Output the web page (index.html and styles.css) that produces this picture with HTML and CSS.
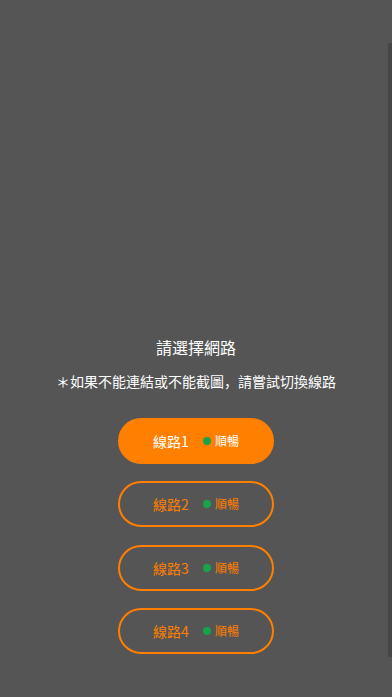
FILE: index.html
```html
<!DOCTYPE html>
<html>
<head>
<meta charset="utf-8">
<link rel="stylesheet" href="styles.css">
</head>
<body>
<div class="page">
  <div class="scrollbar"></div>
  <div class="panel">
    <div class="title">請選擇網路</div>
    <div class="subtitle">＊如果不能連結或不能截圖，請嘗試切換線路</div>
    <div class="lines">
      <div class="line active"><span class="name">線路1</span><span class="status"><span class="dot"></span>順暢</span></div>
      <div class="line"><span class="name">線路2</span><span class="status"><span class="dot"></span>順暢</span></div>
      <div class="line"><span class="name">線路3</span><span class="status"><span class="dot"></span>順暢</span></div>
      <div class="line"><span class="name">線路4</span><span class="status"><span class="dot"></span>順暢</span></div>
    </div>
  </div>
</div>
</body>
</html>
```

FILE: styles.css
```css
html, body {
  margin: 0;
  padding: 0;
}
body {
  background: #555555;
  font-family: "Noto Sans CJK SC", "Noto Sans", sans-serif;
  color: #ffffff;
  text-spacing-trim: space-all;
}
.page {
  position: relative;
  width: 392px;
  height: 697px;
  overflow: hidden;
  display: flex;
  flex-direction: column;
  justify-content: flex-end;
}
.scrollbar {
  position: absolute;
  right: 0;
  top: 43px;
  width: 4px;
  height: 614px;
  background: #464646;
}
.panel {
  display: flex;
  flex-direction: column;
  align-items: center;
  padding-bottom: 43px;
}
.title {
  font-size: 16px;
  line-height: 22px;
  margin-bottom: 13px;
}
.subtitle {
  font-size: 14px;
  line-height: 20px;
  margin-bottom: 27px;
}
.lines {
  display: flex;
  flex-direction: column;
  gap: 17.5px;
}
.line {
  box-sizing: border-box;
  width: 156px;
  height: 46px;
  border: 2px solid #ff7f00;
  border-radius: 23px;
  display: flex;
  align-items: center;
  justify-content: center;
  gap: 14px;
  color: #ff7f00;
}
.line.active {
  background: #ff7f00;
  color: #ffffff;
}
.name {
  font-size: 14px;
  line-height: 20px;
}
.status {
  display: flex;
  align-items: center;
  gap: 4px;
  font-size: 12px;
  line-height: 16px;
}
.dot {
  width: 8px;
  height: 8px;
  border-radius: 50%;
  background: #16a34a;
}
```
